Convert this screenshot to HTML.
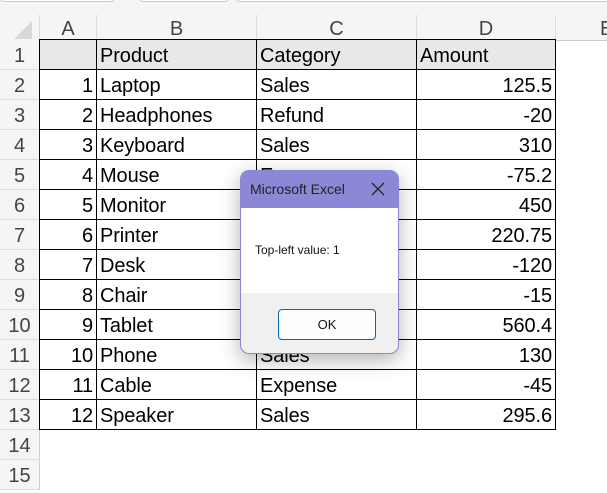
<!DOCTYPE html>
<html><head><meta charset="utf-8"><style>
body{margin:0;width:607px;height:493px;overflow:hidden;background:#fff;font-family:"Liberation Sans",sans-serif;position:relative}
.a{position:absolute;box-sizing:border-box}
.rh{left:0;width:40px;height:30px;background:#f5f5f5;border-bottom:1px solid #dcdcdc;border-right:1px solid #cfcfcf;color:#444;font-size:20px;text-align:center;line-height:33px}
.ch{top:15px;height:26px;background:#f5f5f5;border-right:1px solid #dcdcdc;border-bottom:1px solid #cfcfcf;color:#444;font-size:20px;text-align:center;line-height:28px}
.c{height:31px;border:1px solid #000;margin-left:-1px;font-size:20px;line-height:33px;padding:0 3px;white-space:nowrap;overflow:hidden;color:#000;letter-spacing:-0.1px}
.r{text-align:right}
.h{background:#e8e8e8}
</style></head><body>
<div class="a" style="left:0;top:0;width:607px;height:15px;background:#f5f5f5"></div>
<div class="a" style="left:0;top:-6px;width:115px;height:8px;border:1px solid #ccc;border-radius:4px;background:#fff"></div>
<div class="a" style="left:139px;top:-6px;width:90px;height:8px;border:1px solid #ccc;border-radius:4px;background:#fff"></div>
<div class="a" style="left:236px;top:-6px;width:380px;height:8px;border:1px solid #ccc;border-radius:4px;background:#fff"></div>
<div class="a ch" style="left:0;width:40px"><svg width="40" height="26" style="position:absolute;left:0;top:0"><polygon points="14,24 32,24 32,6" fill="#d8d8d8"/></svg></div>
<div class="a ch" style="left:40px;width:57px">A</div>
<div class="a ch" style="left:97px;width:160px">B</div>
<div class="a ch" style="left:257px;width:160px">C</div>
<div class="a ch" style="left:417px;width:139px">D</div>
<div class="a ch" style="left:556px;width:80px;text-align:left;padding-left:44px">E</div>
<div id="g"></div>
<script>
var rows=[["","Product","Category","Amount"],["1","Laptop","Sales","125.5"],["2","Headphones","Refund","-20"],["3","Keyboard","Sales","310"],["4","Mouse","Expense","-75.2"],["5","Monitor","Sales","450"],["6","Printer","Sales","220.75"],["7","Desk","Expense","-120"],["8","Chair","Refund","-15"],["9","Tablet","Sales","560.4"],["10","Phone","Sales","130"],["11","Cable","Expense","-45"],["12","Speaker","Sales","295.6"]];
var xs=[40,97,257,417,556],h="";
for(var i=0;i<15;i++){var t=40+i*30;h+='<div class="a rh" style="top:'+t+'px">'+(i+1)+'</div>';
if(i<13){for(var j=0;j<4;j++){var cl="a c"+(i==0?" h":"")+((i>0&&(j==0||j==3))?" r":"");
h+='<div class="'+cl+'" style="left:'+xs[j]+'px;top:'+(t-1)+'px;width:'+(xs[j+1]-xs[j]+1)+'px">'+rows[i][j]+'</div>';}}}
document.getElementById("g").innerHTML=h;
</script>
<div class="a" style="left:240px;top:170px;width:159px;height:184px;border:1px solid #8a87d4;border-radius:9px;overflow:hidden;background:#f0f0f0;box-shadow:0 6px 20px rgba(0,0,0,0.3)">
<div class="a" style="left:0;top:0;width:157px;height:37px;background:#8b88d6;color:#222;font-size:14px;line-height:36px;padding-left:9px">Microsoft Excel
<svg width="14" height="14" style="position:absolute;left:130px;top:11px"><path d="M1 1L13 13M13 1L1 13" stroke="#222" stroke-width="1.3"/></svg></div>
<div class="a" style="left:0;top:37px;width:157px;height:85px;background:#fff;font-size:12px;color:#111;padding:35px 0 0 14px">Top-left value: 1</div>
<div class="a" style="left:37px;top:138px;width:98px;height:31px;border:1px solid #0067c0;border-radius:4px;background:#fdfdfd;text-align:center;line-height:29px;font-size:13px;color:#111">OK</div>
</div>
</body></html>
